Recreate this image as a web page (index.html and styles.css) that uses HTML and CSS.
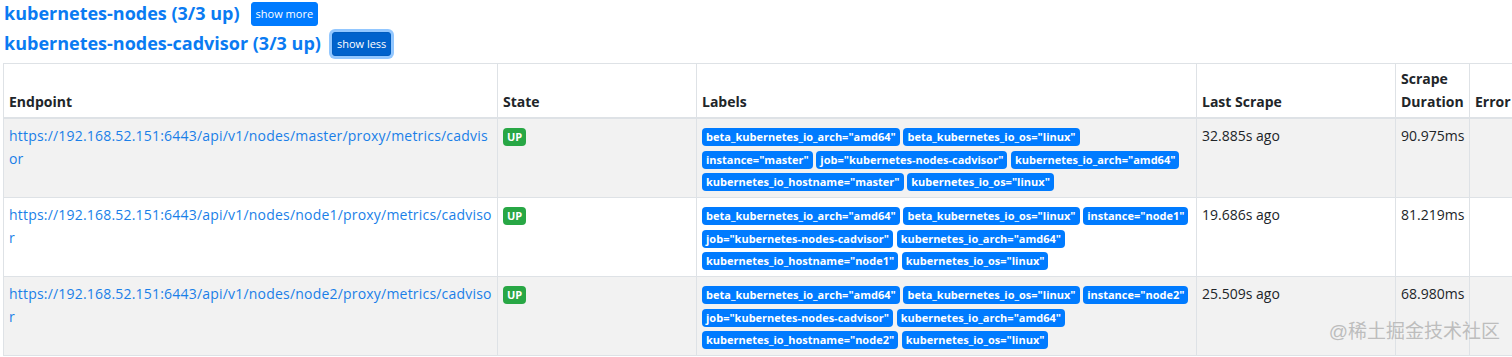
FILE: index.html
```html
<!DOCTYPE html>
<html>
<head>
<meta charset="utf-8">
<link rel="stylesheet" href="styles.css">
</head>
<body>
<div class="page">
  <div class="job job-first">
    <a class="job-title" href="#">kubernetes-nodes (3/3 up)</a>
    <button class="btn">show more</button>
  </div>
  <div class="job job-second">
    <a class="job-title" href="#">kubernetes-nodes-cadvisor (3/3 up)</a>
    <button class="btn btn-active">show less</button>
  </div>
  <table class="targets">
    <colgroup>
      <col class="c-endpoint"><col class="c-state"><col class="c-labels"><col class="c-last"><col class="c-dur"><col class="c-err">
    </colgroup>
    <thead>
      <tr>
        <th>Endpoint</th>
        <th>State</th>
        <th>Labels</th>
        <th>Last Scrape</th>
        <th>Scrape Duration</th>
        <th>Error</th>
      </tr>
    </thead>
    <tbody>
      <tr class="odd">
        <td class="endpoint"><a href="#">https://192.168.52.151:6443/api/v1/nodes/master/proxy/metrics/cadvisor</a></td>
        <td><span class="badge up">UP</span></td>
        <td class="labels"><span class="badge">beta_kubernetes_io_arch="amd64"</span> <span class="badge">beta_kubernetes_io_os="linux"</span> <span class="badge">instance="master"</span> <span class="badge">job="kubernetes-nodes-cadvisor"</span> <span class="badge">kubernetes_io_arch="amd64"</span> <span class="badge">kubernetes_io_hostname="master"</span> <span class="badge">kubernetes_io_os="linux"</span></td>
        <td>32.885s ago</td>
        <td>90.975ms</td>
        <td></td>
      </tr>
      <tr>
        <td class="endpoint"><a href="#">https://192.168.52.151:6443/api/v1/nodes/node1/proxy/metrics/cadvisor</a></td>
        <td><span class="badge up">UP</span></td>
        <td class="labels"><span class="badge">beta_kubernetes_io_arch="amd64"</span> <span class="badge">beta_kubernetes_io_os="linux"</span> <span class="badge">instance="node1"</span> <span class="badge">job="kubernetes-nodes-cadvisor"</span> <span class="badge">kubernetes_io_arch="amd64"</span> <span class="badge">kubernetes_io_hostname="node1"</span> <span class="badge">kubernetes_io_os="linux"</span></td>
        <td>19.686s ago</td>
        <td>81.219ms</td>
        <td></td>
      </tr>
      <tr class="odd">
        <td class="endpoint"><a href="#">https://192.168.52.151:6443/api/v1/nodes/node2/proxy/metrics/cadvisor</a></td>
        <td><span class="badge up">UP</span></td>
        <td class="labels"><span class="badge">beta_kubernetes_io_arch="amd64"</span> <span class="badge">beta_kubernetes_io_os="linux"</span> <span class="badge">instance="node2"</span> <span class="badge">job="kubernetes-nodes-cadvisor"</span> <span class="badge">kubernetes_io_arch="amd64"</span> <span class="badge">kubernetes_io_hostname="node2"</span> <span class="badge">kubernetes_io_os="linux"</span></td>
        <td>25.509s ago</td>
        <td>68.980ms</td>
        <td></td>
      </tr>
    </tbody>
  </table>
</div>
<div class="watermark">@稀土掘金技术社区</div>
</body>
</html>
```
FILE: styles.css
```css
html, body {
  margin: 0;
  padding: 0;
  overflow: hidden;
  background: #fff;
}
body {
  font-family: "Open Sans", "Noto Sans", sans-serif;
  font-size: 14px;
  line-height: 22.5px;
  color: #212529;
}
.page {
  padding: 0 0 0 3px;
}
.job {
  display: flex;
  align-items: center;
  gap: 11px;
  padding-left: 1px;
}
.job-first {
  height: 27px;
}
.job-second {
  height: 33px;
}
.job-title {
  font-size: 18px;
  font-weight: 700;
  color: #0a7bf2;
  text-decoration: none;
}
.btn {
  font-family: inherit;
  font-size: 11px;
  line-height: 16px;
  color: #fff;
  background: #007bff;
  border: 1px solid #007bff;
  border-radius: 3px;
  padding: 3px 4px;
  cursor: pointer;
}
.btn-active {
  background: #0062cc;
  border-color: #005cbf;
  box-shadow: 0 0 0 3px rgba(38, 143, 255, 0.5);
}
.targets {
  margin-top: 3px;
  border-collapse: collapse;
  table-layout: fixed;
  width: 1560px;
}
.c-endpoint { width: 494px; }
.c-state { width: 199px; }
.c-labels { width: 500px; }
.c-last { width: 199px; }
.c-dur { width: 74px; }
.c-err { width: 94px; }
.targets th, .targets td {
  border: 1px solid #dee2e6;
  padding: 4px 5px;
  text-align: left;
}
.targets th {
  vertical-align: bottom;
  font-weight: 700;
  border-bottom: 2px solid #dee2e6;
}
.targets td {
  vertical-align: top;
  padding-top: 6px;
  height: 68px;
}
.targets tr.odd td {
  background: #f2f2f2;
}
.endpoint a {
  color: #1a7fe8;
  text-decoration: none;
  word-break: break-all;
  letter-spacing: 0.2px;
}
.badge {
  display: inline-block;
  font-size: 11px;
  font-weight: 700;
  line-height: 12px;
  color: #fff;
  background: #007bff;
  padding: 3px 4px;
  border-radius: 4px;
  white-space: nowrap;
  vertical-align: baseline;
}
.badge.up {
  background: #28a745;
  margin-top: 2px;
}
.watermark {
  position: absolute;
  right: 12px;
  top: 322px;
  font-size: 19px;
  line-height: 19px;
  color: #bdbdbd;
  font-family: "Liberation Sans", "Noto Sans CJK SC", sans-serif;
}
```
